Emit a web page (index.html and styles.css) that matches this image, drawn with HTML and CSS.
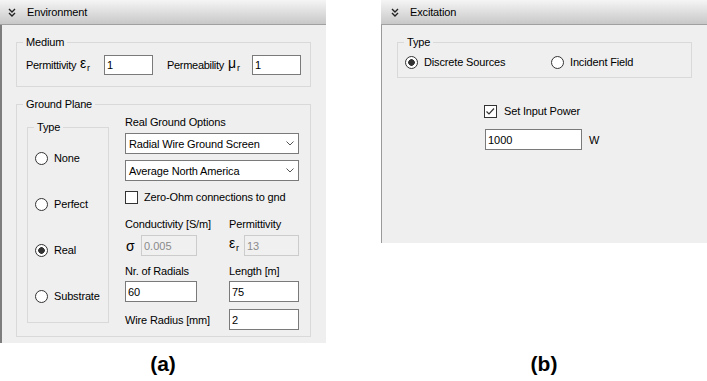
FILE: index.html
```html
<!DOCTYPE html>
<html lang="en">
<head>
    <meta charset="UTF-8">
    <title>Environment and Excitation</title>
    <link rel="stylesheet" href="styles.css">
</head>
<body>
    <div class="figure">
        <div class="panel panel-env">
            <div class="panel-head">
                <svg class="collapse" width="8" height="9" viewBox="0 0 8 9"><path d="M1 1l3 3 3-3M1 5l3 3 3-3"/></svg>
                <span>Environment</span>
            </div>
            <div class="panel-body">
                <fieldset class="group medium">
                    <legend>Medium</legend>
                    <div class="medium-row">
                        <span class="lbl-perm">Permittivity</span>
                        <span class="sym">ε<sub>r</sub></span>
                        <input class="field w-medium" value="1">
                        <span class="lbl-perme">Permeability</span>
                        <span class="sym">μ<sub>r</sub></span>
                        <input class="field w-medium" value="1">
                    </div>
                </fieldset>

                <fieldset class="group ground">
                    <legend>Ground Plane</legend>
                    <div class="ground-body">
                        <fieldset class="group type">
                            <legend>Type</legend>
                            <label class="radio"><span class="dot"></span>None</label>
                            <label class="radio"><span class="dot"></span>Perfect</label>
                            <label class="radio"><span class="dot on"></span>Real</label>
                            <label class="radio"><span class="dot"></span>Substrate</label>
                        </fieldset>

                        <div class="options">
                            <div class="opt-title">Real Ground Options</div>
                            <div class="select">
                                <span>Radial Wire Ground Screen</span>
                                <svg class="arrow" width="8" height="5" viewBox="0 0 8 5"><path d="M0.5 0.5l3.5 3.5 3.5-3.5"/></svg>
                            </div>
                            <div class="select">
                                <span>Average North America</span>
                                <svg class="arrow" width="8" height="5" viewBox="0 0 8 5"><path d="M0.5 0.5l3.5 3.5 3.5-3.5"/></svg>
                            </div>
                            <label class="check-row"><span class="box"></span>Zero-Ohm connections to gnd</label>

                            <div class="opt-grid">
                                <div class="lbl-row">Conductivity [S/m]</div>
                                <div class="lbl-row">Permittivity</div>
                                <div class="in-row">
                                    <span class="sym sigma">σ</span>
                                    <input class="field off w-cond" value="0.005" disabled>
                                </div>
                                <div class="in-row">
                                    <span class="sym eps">ε<sub>r</sub></span>
                                    <input class="field off w-eps" value="13" disabled>
                                </div>
                                <div class="lbl-row second">Nr. of Radials</div>
                                <div class="lbl-row second">Length [m]</div>
                                <div class="in-row tight">
                                    <input class="field w-rad" value="60">
                                </div>
                                <div class="in-row tight">
                                    <input class="field w-len" value="75">
                                </div>
                                <div class="in-row last">Wire Radius [mm]</div>
                                <div class="in-row last">
                                    <input class="field w-len" value="2">
                                </div>
                            </div>
                        </div>
                    </div>
                </fieldset>
            </div>
        </div>

        <div class="panel panel-exc">
            <div class="panel-head">
                <svg class="collapse" width="8" height="9" viewBox="0 0 8 9"><path d="M1 1l3 3 3-3M1 5l3 3 3-3"/></svg>
                <span>Excitation</span>
            </div>
            <div class="panel-body">
                <fieldset class="group exc-type">
                    <legend>Type</legend>
                    <div class="exc-row">
                        <label class="radio wide"><span class="dot on"></span>Discrete Sources</label>
                        <label class="radio"><span class="dot"></span>Incident Field</label>
                    </div>
                </fieldset>
                <div class="power">
                    <label class="check-row">
                        <svg class="box-svg" width="13" height="13" viewBox="0 0 13 13"><rect x="0.5" y="0.5" width="12" height="12"/><path d="M2.5 6.5l2.5 2.5 5-5.5"/></svg>
                        Set Input Power
                    </label>
                    <div class="power-row">
                        <input class="field w-power" value="1000">
                        <span>W</span>
                    </div>
                </div>
            </div>
        </div>

        <div class="caption">(a)</div>
        <div class="caption cap-b">(b)</div>
    </div>
</body>
</html>
```

FILE: styles.css
```css
body {
    margin: 0;
    background: #fff;
    font-family: "Liberation Sans", Arial, sans-serif;
    font-size: 11px;
    letter-spacing: -0.15px;
    color: #000;
}
.figure {
    display: grid;
    grid-template-columns: 326px 55px 326px;
    align-items: start;
}
.panel-env {
    grid-column: 1;
}
.panel-exc {
    grid-column: 3;
}
.panel-head {
    height: 24px;
    border-bottom: 1px solid #a0a0a0;
    background: linear-gradient(#f5f5f5, #c8c8c8);
    display: flex;
    align-items: center;
    gap: 11px;
    padding-left: 8px;
    line-height: 14px;
}
.panel-exc .panel-head {
    padding-left: 10px;
}
.collapse {
    fill: none;
    stroke: #222;
    stroke-width: 1.4;
}
.panel-body {
    background: #efefef;
}
.panel-env .panel-body {
    border-left: 2px solid #7d7d7d;
    padding: 10px 15px 6px 14px;
}
.panel-exc .panel-body {
    border-left: 1px solid #9a9a9a;
    height: 218px;
    box-sizing: border-box;
    padding: 10px 15px 0 15px;
}

/* group boxes */
.group {
    margin: 0;
    padding: 0 6px;
    border: 1px solid #d9d9d9;
    min-width: 0;
}
.group legend {
    padding: 0 3px;
    line-height: 14px;
}
.medium {
    padding-bottom: 11px;
}
.medium-row {
    display: flex;
    align-items: center;
    margin: 6px 0 0 3px;
    height: 20px;
}
.medium-row > * {
    flex: none;
}
.lbl-perm {
    width: 54px;
    letter-spacing: -0.3px;
}
.lbl-perme {
    width: 61px;
    margin-left: 14px;
    letter-spacing: -0.3px;
}
.sym {
    width: 24px;
    font-size: 14px;
    line-height: 14px;
}
.sym sub {
    font-size: 9px;
    vertical-align: -3px;
    margin-left: 1px;
}

/* inputs */
.field {
    box-sizing: border-box;
    height: 21px;
    margin: 0;
    padding: 0 2px;
    border: 1px solid #7a7a7a;
    background: #fff;
    font: inherit;
    color: #000;
}
.w-medium {
    width: 49px;
    height: 20px;
}
.field.off {
    border-color: #cccccc;
    background: #f0f0f0;
    color: #8a8a8a;
}
.w-cond {
    width: 56px;
}
.w-eps {
    width: 55px;
}
.w-rad {
    width: 72px;
}
.w-len {
    width: 70px;
}
.w-power {
    width: 97px;
}

/* ground plane */
.ground {
    margin-top: 10px;
    padding-bottom: 6px;
}
.ground-body {
    display: grid;
    grid-template-columns: 82px 174px;
    column-gap: 16px;
    align-items: start;
    margin-left: 4px;
}
.type {
    margin-top: 9px;
    padding-bottom: 19px;
}
.radio {
    display: flex;
    align-items: center;
    gap: 6px;
    height: 14px;
    margin: 32px 0 0 1px;
}
.type legend + .radio {
    margin-top: 17px;
}
.dot {
    width: 13px;
    height: 13px;
    box-sizing: border-box;
    border: 1px solid #333;
    border-radius: 50%;
    background: #fff;
}
.dot.on {
    background: radial-gradient(circle, #333 3px, #fff 3.6px);
}

.options {
    margin-top: 4px;
}
.opt-title {
    height: 14px;
    line-height: 14px;
}
.select {
    display: flex;
    align-items: center;
    justify-content: space-between;
    box-sizing: border-box;
    height: 21px;
    margin-top: 4px;
    padding: 0 4px 0 3px;
    border: 1px solid #7a7a7a;
    background: #fff;
}
.select + .select {
    margin-top: 6px;
}
.arrow {
    fill: none;
    stroke: #555;
    stroke-width: 1;
}
.check-row {
    display: flex;
    align-items: center;
    gap: 6px;
    height: 14px;
    margin-top: 9px;
}
.box {
    width: 13px;
    height: 13px;
    box-sizing: border-box;
    border: 1px solid #333;
    background: #fff;
}
.box-svg rect {
    fill: #fff;
    stroke: #333;
}
.box-svg path {
    fill: none;
    stroke: #333;
    stroke-width: 1.2;
}
.opt-grid {
    display: grid;
    grid-template-columns: 104px 70px;
}
.lbl-row {
    height: 14px;
    line-height: 14px;
    margin-top: 13px;
}
.lbl-row.second {
    margin-top: 8px;
}
.in-row {
    display: flex;
    align-items: center;
    height: 21px;
    margin-top: 4px;
}
.in-row.tight {
    margin-top: 3px;
}
.in-row.last {
    margin-top: 7px;
}
.sigma {
    width: 16px;
    padding-left: 1px;
    box-sizing: border-box;
}
.eps {
    width: 15px;
}

/* excitation */
.exc-type {
    padding-bottom: 8px;
}
.exc-row {
    display: flex;
    margin-left: 1px;
}
.exc-row .radio {
    margin: 6px 0 0;
}
.radio.wide {
    width: 146px;
}
.power {
    margin: 26px 0 0 87px;
}
.power .check-row {
    margin-top: 0;
    gap: 7px;
}
.power-row {
    display: flex;
    align-items: center;
    gap: 7px;
    margin: 11px 0 0 1px;
}

.caption {
    grid-column: 1;
    margin-top: 9px;
    text-align: center;
    font-size: 21px;
    font-weight: bold;
    letter-spacing: 0;
    line-height: 24px;
}
.cap-b {
    grid-column: 3;
}
```
